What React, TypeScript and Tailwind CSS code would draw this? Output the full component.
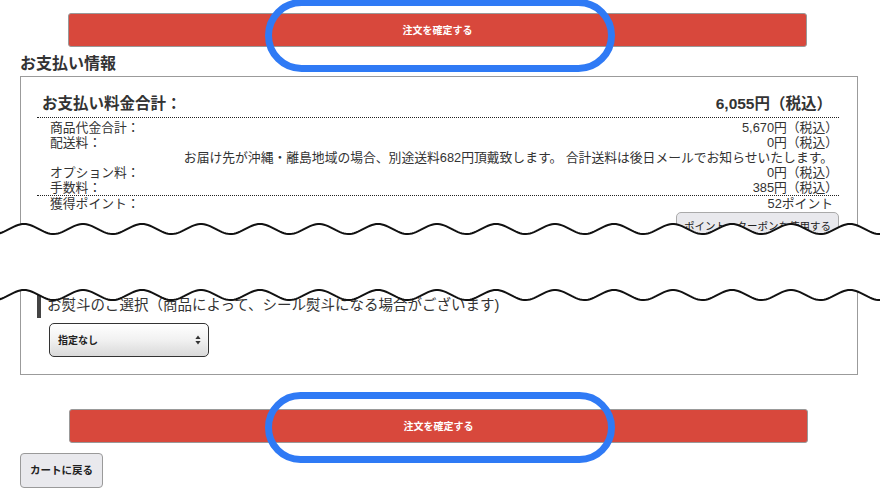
import React from "react";

const font = "font-['Liberation_Sans','Noto_Sans_CJK_JP',sans-serif]";

function wavePoints(c: number) {
  const pts: string[] = [];
  for (let x = -2; x <= 882; x += 2) {
    const y = c - 5 * Math.cos((2 * Math.PI * (x - 24)) / 59);
    pts.push(`${x},${y.toFixed(2)}`);
  }
  return pts;
}

function TearCut() {
  const top = wavePoints(229);
  const bottom = wavePoints(295);
  const fill = "M" + top.join(" L") + " L" + [...bottom].reverse().join(" L") + " Z";
  return (
    <svg className="pointer-events-none absolute left-0 top-0" width={880} height={500}>
      <path d={fill} fill="#ffffff" />
      <path d={"M" + top.join(" L")} fill="none" stroke="#111" strokeWidth={2} />
      <path d={"M" + bottom.join(" L")} fill="none" stroke="#111" strokeWidth={2} />
    </svg>
  );
}

function OrderButton({ className }: { className: string }) {
  return (
    <button
      className={`flex h-[34px] w-[739px] items-center justify-center rounded-[3px] border border-[#999] bg-[#d8483c] text-[10px] font-bold text-white ${className}`}
    >
      注文を確定する
    </button>
  );
}

const rows = [
  { label: "商品代金合計：", value: "5,670円（税込）" },
  { label: "配送料：", value: "0円（税込）" },
  { note: "お届け先が沖縄・離島地域の場合、別途送料682円頂戴致します。 合計送料は後日メールでお知らせいたします。" },
  { label: "オプション料：", value: "0円（税込）" },
  { label: "手数料：", value: "385円（税込）" },
];

export default function App() {
  return (
    <div className={`relative h-[500px] w-[880px] overflow-hidden bg-white text-[#333] ${font}`}>
      <div className="flex flex-col pt-[13px]">
        <OrderButton className="ml-[68px]" />

        <h2 className="ml-[20px] mt-[7px] h-[20px] text-[16px] font-bold leading-[20px] text-[#333]">
          お支払い情報
        </h2>

        <div className="ml-[20px] mt-[2px] w-[838px] border border-[#9b9b9b] pb-[17px]">
          <div className="ml-[16px] mr-[18px] mt-[16px]">
            <div className="flex h-[25px] items-center justify-between border-b border-dotted border-[#222] pb-[2px] pl-[5px] pr-[13px] text-[15.5px] font-bold">
              <span>お支払い料金合計：</span>
              <span className="-mr-[6px]">6,055円（税込）</span>
            </div>

            <div className="border-b border-dotted border-[#222] pl-[13px] pr-[6px] pt-[2px] text-[12.8px] leading-[15px]">
              {rows.map((r, i) =>
                r.note ? (
                  <div key={i} className="text-right">
                    {r.note}
                  </div>
                ) : (
                  <div key={i} className="flex justify-between">
                    <span>{r.label}</span>
                    <span className="-mr-[5px]">{r.value}</span>
                  </div>
                )
              )}
            </div>

            <div className="flex justify-between pl-[13px] pr-[6px] text-[12.8px] leading-[15px]">
              <span>獲得ポイント：</span>
              <span>52ポイント</span>
            </div>

            <div className="mt-[1px] flex justify-end">
              <button className="h-[30px] w-[163px] whitespace-nowrap rounded-[5px] border border-[#aaa] bg-[#e9e9ed] text-[10.5px] text-[#222]">
                ポイント・クーポンを使用する
              </button>
            </div>

            <div className="mt-[51px] flex h-[25px] items-center border-l-[4px] border-[#444] pl-[6px] text-[14.5px] leading-[25px]">
              お熨斗のご選択（商品によって、シール熨斗になる場合がございます)
            </div>

            <div className="ml-[12px] mt-[5px] flex h-[34px] w-[160px] items-center justify-between rounded-[5px] border border-[#333] bg-linear-to-b from-[#ffffff] via-[#f1f1f1] to-[#d9d9d9] pl-[8px] pr-[7px] text-[10px] font-bold text-[#222] shadow-[inset_0_1px_2px_rgba(255,255,255,0.9)]">
              <span>指定なし</span>
              <svg width="6" height="10" viewBox="0 0 6 10">
                <path d="M3 0.5 L5.6 4 H0.4 Z" fill="#333" />
                <path d="M3 9.5 L5.6 6 H0.4 Z" fill="#333" />
              </svg>
            </div>
          </div>
        </div>

        <OrderButton className="ml-[69px] mt-[34px]" />

        <button className="ml-[20px] mt-[10px] h-[35px] w-[83px] rounded-[4px] border border-[#9a9a9a] bg-[#e9e9ed] text-[10.5px] font-semibold text-[#222]">
          カートに戻る
        </button>
      </div>

      <TearCut />

      <div className="pointer-events-none absolute left-[265px] top-[-1px] h-[73px] w-[350px] rounded-full border-[7px] border-[#2f7af5]" />
      <div className="pointer-events-none absolute left-[265px] top-[392px] h-[71px] w-[350px] rounded-full border-[7px] border-[#2f7af5]" />
    </div>
  );
}
